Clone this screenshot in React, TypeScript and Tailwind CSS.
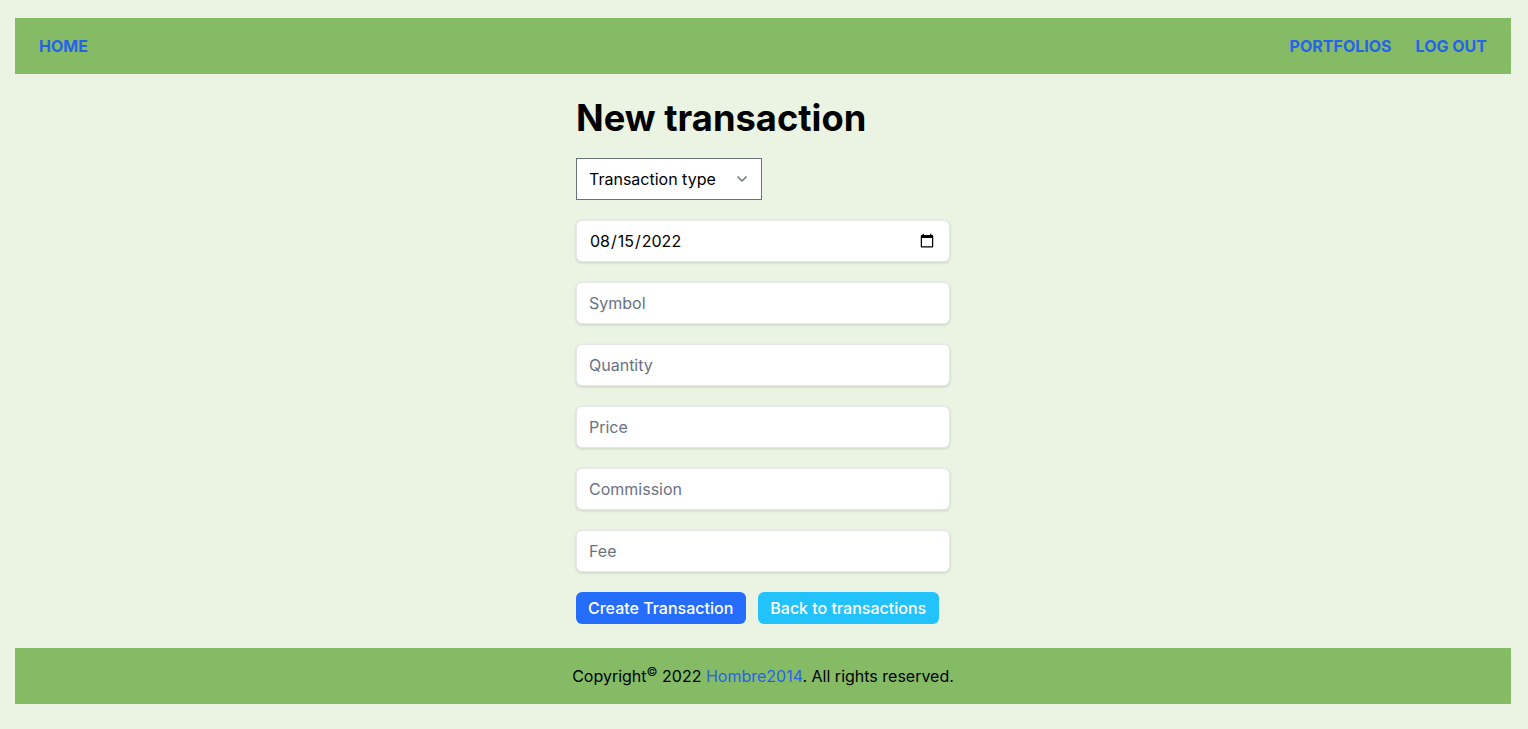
import React from "react";

const inputClass =
  "w-full h-[42px] rounded-md border border-gray-200 bg-white px-3 text-base text-black placeholder:text-gray-500 shadow-[0_1px_3px_rgba(0,0,0,0.15)] outline-none";

export default function App() {
  const fields = ["Symbol", "Quantity", "Price", "Commission", "Fee"];

  return (
    <div
      className="min-h-screen bg-[#ebf3e3] pl-[15px] pr-[17px] pt-[18px] pb-[25px]"
      style={{ fontFamily: "Inter, 'Noto Sans', sans-serif" }}
    >
      <header className="flex h-14 items-center justify-between bg-[#86bb65] px-6">
        <a href="#" className="text-base font-bold uppercase text-[#2563eb]">
          Home
        </a>
        <nav className="flex gap-6">
          <a href="#" className="text-base font-bold uppercase text-[#2563eb]">
            Portfolios
          </a>
          <a href="#" className="text-base font-bold uppercase text-[#2563eb]">
            Log out
          </a>
        </nav>
      </header>

      <main className="mx-auto w-[374px] pt-5 pb-6">
        <h1 className="text-[36.3px] font-bold leading-[48px] text-black">New transaction</h1>

        <div className="mt-4">
          <div className="relative inline-block">
            <select
              defaultValue=""
              className="h-[42px] w-[186px] appearance-none border border-gray-500 bg-white pl-3 pr-10 text-base text-black outline-none"
            >
              <option value="" disabled>
                Transaction type
              </option>
              <option value="buy">Buy</option>
              <option value="sell">Sell</option>
            </select>
            <svg
              className="pointer-events-none absolute right-[14px] top-[15px] h-3 w-3 text-gray-500"
              viewBox="0 0 12 12"
              fill="none"
              stroke="currentColor"
              strokeWidth="1.5"
            >
              <path d="M1.5 3.5 6 8l4.5-4.5" />
            </svg>
          </div>
        </div>

        <div className="mt-5 flex flex-col gap-5">
          <input type="date" defaultValue="2022-08-15" className={inputClass} />
          {fields.map((f) => (
            <input key={f} type="text" placeholder={f} className={inputClass} />
          ))}
        </div>

        <div className="mt-5 flex gap-3">
          <button className="h-8 rounded-md bg-[#256dff] pl-3 pr-[13px] text-base font-medium text-white">
            Create Transaction
          </button>
          <button className="h-8 rounded-md bg-[#22c3fc] pl-3 pr-[13px] text-base font-medium text-white">
            Back to transactions
          </button>
        </div>
      </main>

      <footer className="flex h-14 items-center justify-center bg-[#86bb65] text-base text-black">
        <span>
          Copyright<sup>©</sup> 2022{" "}
          <a href="#" className="text-[#2563eb]">
            Hombre2014
          </a>
          . All rights reserved.
        </span>
      </footer>
    </div>
  );
}
